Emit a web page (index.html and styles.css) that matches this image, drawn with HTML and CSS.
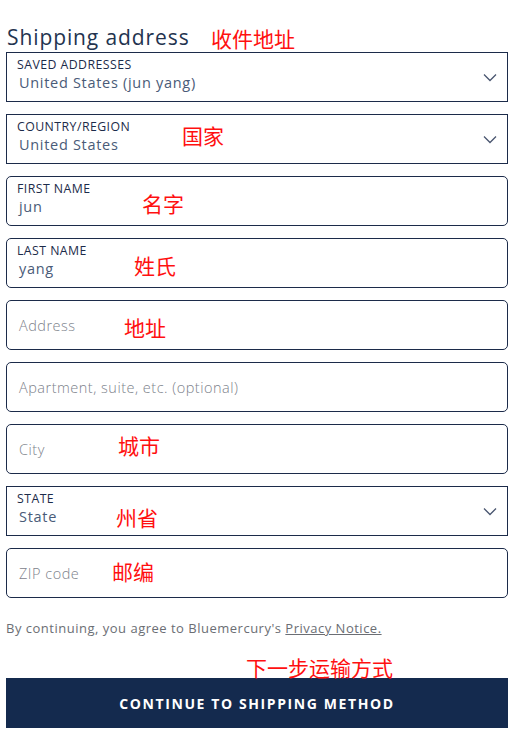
FILE: index.html
```html
<!DOCTYPE html>
<html lang="en">
<head>
<meta charset="utf-8">
<title>Shipping address</title>
<link rel="stylesheet" href="styles.css">
</head>
<body>
<div class="page">
  <h1 class="title">Shipping address</h1>
  <form class="form">
    <div class="field select">
      <div class="stack">
        <span class="label">SAVED ADDRESSES</span>
        <span class="value">United States (jun yang)</span>
      </div>
      <svg class="chev" viewBox="0 0 14 9" width="14" height="9"><path d="M1 1.5 L7 7.5 L13 1.5" fill="none" stroke="#4a5670" stroke-width="1.3"/></svg>
    </div>
    <div class="field select">
      <div class="stack">
        <span class="label">COUNTRY/REGION</span>
        <span class="value">United States</span>
      </div>
      <svg class="chev" viewBox="0 0 14 9" width="14" height="9"><path d="M1 1.5 L7 7.5 L13 1.5" fill="none" stroke="#4a5670" stroke-width="1.3"/></svg>
    </div>
    <div class="field input">
      <div class="stack">
        <span class="label">FIRST NAME</span>
        <span class="value">jun</span>
      </div>
    </div>
    <div class="field input">
      <div class="stack">
        <span class="label">LAST NAME</span>
        <span class="value">yang</span>
      </div>
    </div>
    <div class="field input"><span class="placeholder">Address</span></div>
    <div class="field input"><span class="placeholder">Apartment, suite, etc. (optional)</span></div>
    <div class="field input"><span class="placeholder">City</span></div>
    <div class="field select">
      <div class="stack">
        <span class="label">STATE</span>
        <span class="value">State</span>
      </div>
      <svg class="chev" viewBox="0 0 14 9" width="14" height="9"><path d="M1 1.5 L7 7.5 L13 1.5" fill="none" stroke="#4a5670" stroke-width="1.3"/></svg>
    </div>
    <div class="field input"><span class="placeholder">ZIP code</span></div>
  </form>
  <p class="notice">By continuing, you agree to Bluemercury's <a class="link" href="#">Privacy Notice.</a></p>
  <button class="continue" type="button">CONTINUE TO SHIPPING METHOD</button>

  <span class="note n-title">收件地址</span>
  <span class="note n-country">国家</span>
  <span class="note n-first">名字</span>
  <span class="note n-last">姓氏</span>
  <span class="note n-addr">地址</span>
  <span class="note n-city">城市</span>
  <span class="note n-state">州省</span>
  <span class="note n-zip">邮编</span>
  <span class="note n-next">下一步运输方式</span>
</div>
</body>
</html>
```

FILE: styles.css
```css
html, body {
  margin: 0;
  padding: 0;
  background: #ffffff;
}
body {
  font-family: "Open Sans", "Noto Sans", sans-serif;
  color: #1c2b4a;
}
.page {
  position: relative;
  width: 502px;
  padding: 24px 7px 0 6px;
}
.title {
  margin: 0 0 2px 1px;
  font-size: 21px;
  font-weight: 400;
  letter-spacing: 0.9px;
  line-height: 26px;
  color: #23334f;
}
.form {
  display: flex;
  flex-direction: column;
  gap: 12px;
}
.field {
  height: 50px;
  box-sizing: border-box;
  border: 1px solid #1c2b4a;
  display: flex;
  align-items: center;
  justify-content: space-between;
  padding: 0 10px 0 10px;
}
.field.input {
  border-radius: 5px;
}
.stack {
  display: flex;
  flex-direction: column;
  margin-top: -5px;
}
.label {
  font-size: 12.3px;
  line-height: 17px;
  letter-spacing: 0.45px;
  color: #1c2b4a;
}
.value {
  font-size: 14.5px;
  line-height: 20px;
  margin-left: 2px;
  letter-spacing: 0.7px;
  color: #4a5b78;
}
.placeholder {
  font-size: 14.5px;
  margin-left: 2px;
  letter-spacing: 0.5px;
  font-weight: 300;
  color: #7d828b;
}
.chev {
  display: block;
}
.notice {
  margin: 22px 0 0 0;
  font-size: 13px;
  letter-spacing: 0.5px;
  color: #6b6e74;
  line-height: 16px;
}
.link {
  color: #6b6e74;
  text-decoration: underline;
}
.continue {
  display: block;
  width: 502px;
  height: 50px;
  margin-top: 42px;
  border: none;
  background: #142a4e;
  color: #ffffff;
  font-family: "Open Sans", "Noto Sans", sans-serif;
  font-weight: 700;
  font-size: 14px;
  letter-spacing: 1.6px;
  padding: 0;
}
.note {
  position: absolute;
  font-family: "Noto Sans CJK SC", sans-serif;
  font-size: 21px;
  line-height: 22px;
  color: #ff1010;
  white-space: nowrap;
}
.n-title { left: 211px; top: 27px; }
.n-country { left: 182px; top: 124px; }
.n-first { left: 142px; top: 192px; }
.n-last { left: 134px; top: 254px; }
.n-addr { left: 124px; top: 316px; }
.n-city { left: 118px; top: 434px; }
.n-state { left: 116px; top: 506px; }
.n-zip { left: 112px; top: 560px; }
.n-next { left: 246px; top: 656px; }
```
